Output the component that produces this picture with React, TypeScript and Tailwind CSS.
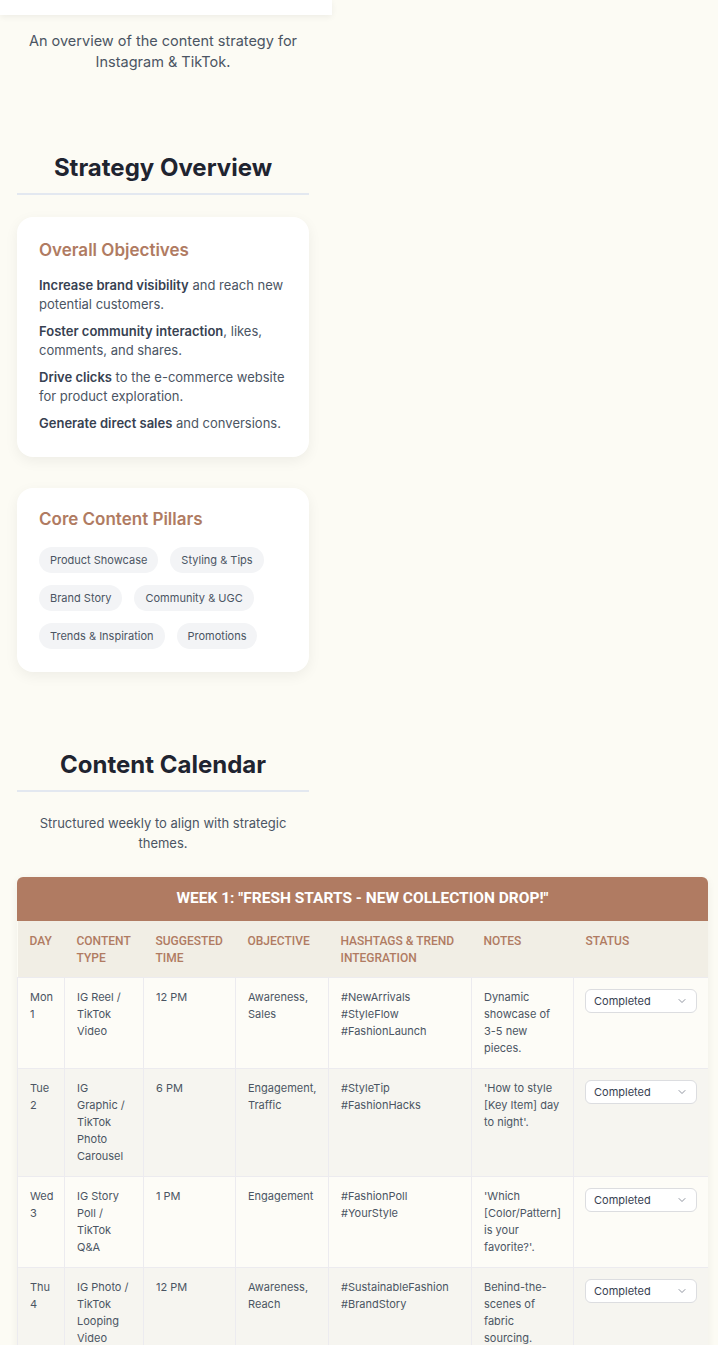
import React from 'react';
import { ChevronDown } from 'lucide-react';

const objectives = [
  { bold: 'Increase brand visibility', rest: ' and reach new potential customers.' },
  { bold: 'Foster community interaction', rest: ', likes, comments, and shares.' },
  { bold: 'Drive clicks', rest: ' to the e-commerce website for product exploration.' },
  { bold: 'Generate direct sales', rest: ' and conversions.' },
];

const pillars = [
  'Product Showcase',
  'Styling & Tips',
  'Brand Story',
  'Community & UGC',
  'Trends & Inspiration',
  'Promotions',
];

const columns = [
  { label: 'Day', width: 47 },
  { label: 'Content Type', width: 79 },
  { label: 'Suggested Time', width: 92 },
  { label: 'Objective', width: 93 },
  { label: 'Hashtags & Trend Integration', width: 143 },
  { label: 'Notes', width: 102 },
  { label: 'Status', width: 135 },
];

const rows = [
  {
    day: 'Mon 1',
    type: 'IG Reel / TikTok Video',
    time: '12 PM',
    objective: 'Awareness, Sales',
    tags: ['#NewArrivals', '#StyleFlow', '#FashionLaunch'],
    notes: 'Dynamic showcase of 3-5 new pieces.',
  },
  {
    day: 'Tue 2',
    type: 'IG Graphic / TikTok Photo Carousel',
    time: '6 PM',
    objective: 'Engagement, Traffic',
    tags: ['#StyleTip', '#FashionHacks'],
    notes: "'How to style [Key Item] day to night'.",
  },
  {
    day: 'Wed 3',
    type: 'IG Story Poll / TikTok Q&A',
    time: '1 PM',
    objective: 'Engagement',
    tags: ['#FashionPoll', '#YourStyle'],
    notes: "'Which [Color/Pattern] is your favorite?'.",
  },
  {
    day: 'Thu 4',
    type: 'IG Photo / TikTok Looping Video',
    time: '12 PM',
    objective: 'Awareness, Reach',
    tags: ['#SustainableFashion', '#BrandStory'],
    notes: 'Behind-the-scenes of fabric sourcing.',
  },
];

const headFont = { fontFamily: 'Roboto, "Liberation Sans", sans-serif' };

const SectionTitle: React.FC<{ children: React.ReactNode }> = ({ children }) => (
  <h2 className="text-center text-[24px] leading-[32px] font-bold text-[#1f2430] pb-[9px] border-b-2 border-[#e3e8f0]">
    {children}
  </h2>
);

const StatusSelect = () => (
  <div className="flex items-center justify-between h-[24px] w-[112px] px-2 bg-white border border-[#dcdde0] rounded-[6px] text-[11px] text-[#374151]">
    <span>Completed</span>
    <ChevronDown className="w-3 h-3 text-[#6b7280]" strokeWidth={1.5} />
  </div>
);

export default function App() {
  return (
    <div className="min-h-screen bg-[#fcfbf4] text-[#374151]" style={{ fontFamily: 'Inter, "Noto Sans", sans-serif' }}>
      <div className="h-[15px] w-[332px] bg-white shadow-[0_2px_6px_rgba(0,0,0,0.06)]" />

      <div className="w-[326px] px-[17px]">
        <p className="mt-[15px] text-center text-[14.5px] leading-[21px] text-[#4b5563]">
          An overview of the content strategy for Instagram &amp; TikTok.
        </p>

        <section className="mt-[80px]">
          <SectionTitle>Strategy Overview</SectionTitle>

          <div className="mt-[22px] bg-white rounded-2xl shadow-[0_4px_14px_rgba(0,0,0,0.06)] px-[22px] pt-[23px] pb-[24px]">
            <h3 className="text-[17px] leading-[20px] font-semibold text-[#b07b62]">Overall Objectives</h3>
            <ul className="mt-[16px] flex flex-col gap-[8px] text-[13px] leading-[19px] text-[#4b5563]">
              {objectives.map((o) => (
                <li key={o.bold}>
                  <span className="font-semibold text-[#374151]">{o.bold}</span>
                  {o.rest}
                </li>
              ))}
            </ul>
          </div>

          <div className="mt-[31px] bg-white rounded-2xl shadow-[0_4px_14px_rgba(0,0,0,0.06)] px-[22px] pt-[21px] pb-[23px]">
            <h3 className="text-[17px] leading-[20px] font-semibold text-[#b07b62]">Core Content Pillars</h3>
            <div className="mt-[18px] flex flex-wrap gap-x-[12px] gap-y-[12px]">
              {pillars.map((p) => (
                <span
                  key={p}
                  className="h-[26px] flex items-center px-[11px] rounded-full bg-[#f3f4f6] text-[11px] text-[#4b5563]"
                >
                  {p}
                </span>
              ))}
            </div>
          </div>
        </section>

        <section className="mt-[77px]">
          <SectionTitle>Content Calendar</SectionTitle>
          <p className="mt-[21px] text-center text-[13px] leading-[20px] text-[#4b5563]">
            Structured weekly to align with strategic themes.
          </p>

          <div className="mt-[24px] w-[691px] rounded-t-[6px] overflow-hidden shadow-[0_2px_8px_rgba(0,0,0,0.06)]">
            <div
              className="h-[44px] flex items-center justify-center bg-[#b07b62] text-white text-[15.5px] font-bold"
              style={headFont}
            >
              WEEK 1: "FRESH STARTS - NEW COLLECTION DROP!"
            </div>
            <table className="w-full table-fixed border-collapse">
              <colgroup>
                {columns.map((c) => (
                  <col key={c.label} style={{ width: c.width }} />
                ))}
              </colgroup>
              <thead>
                <tr className="bg-[#f1eee5]">
                  {columns.map((c) => (
                    <th
                      key={c.label}
                      className="px-[12px] pt-[12px] pb-[10px] text-left align-top text-[12px] leading-[17px] font-medium uppercase text-[#b07b62]"
                      style={headFont}
                    >
                      {c.label}
                    </th>
                  ))}
                </tr>
              </thead>
              <tbody className="text-[11px] leading-[17px] text-[#4b5563]">
                {rows.map((r, i) => (
                  <tr key={r.day} className={i % 2 === 0 ? 'bg-[#fdfcf7]' : 'bg-[#f6f5f0]'}>
                    <td className="px-[12px] py-[11px] align-top border border-[#ecebef]">{r.day}</td>
                    <td className="px-[12px] py-[11px] align-top border border-[#ecebef]">{r.type}</td>
                    <td className="px-[12px] py-[11px] align-top border border-[#ecebef]">{r.time}</td>
                    <td className="px-[12px] py-[11px] align-top border border-[#ecebef]">{r.objective}</td>
                    <td className="px-[12px] py-[11px] align-top border border-[#ecebef]">
                      {r.tags.map((t) => (
                        <div key={t}>{t}</div>
                      ))}
                    </td>
                    <td className="px-[12px] py-[11px] align-top border border-[#ecebef]">{r.notes}</td>
                    <td className="px-[11px] py-[11px] align-top border border-[#ecebef]">
                      <StatusSelect />
                    </td>
                  </tr>
                ))}
              </tbody>
            </table>
          </div>
        </section>
      </div>
      <div className="h-[40px]" />
    </div>
  );
}
